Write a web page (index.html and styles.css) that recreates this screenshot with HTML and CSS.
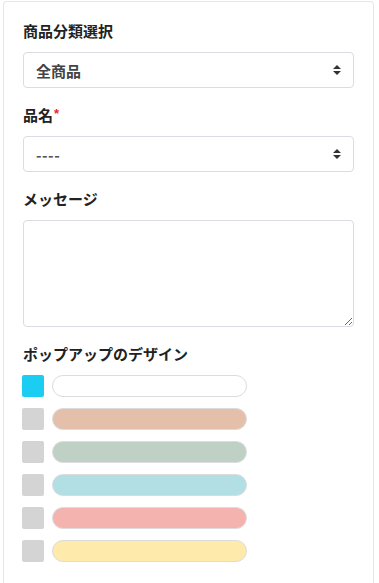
FILE: index.html
```html
<!DOCTYPE html>
<html lang="ja">
<head>
<meta charset="UTF-8" />
<meta name="viewport" content="width=device-width, initial-scale=1" />
<title>ポップアップ設定</title>
<link rel="stylesheet" href="styles.css">
</head>
<body>

<div class="page">
  <form class="card">
    <div class="field">
      <label class="field-label" for="category">商品分類選択</label>
      <select class="form-select" id="category">
        <option>全商品</option>
      </select>
    </div>

    <div class="field">
      <label class="field-label" for="product">品名<span class="required">*</span></label>
      <select class="form-select form-select-empty" id="product">
        <option>----</option>
      </select>
    </div>

    <div class="field">
      <label class="field-label" for="message">メッセージ</label>
      <textarea class="form-textarea" id="message"></textarea>
    </div>

    <div class="field">
      <div class="field-label">ポップアップのデザイン</div>
      <ul class="design-list">
        <li class="design-row"><span class="design-check is-checked"></span><span class="design-pill pill-white"></span></li>
        <li class="design-row"><span class="design-check"></span><span class="design-pill pill-beige"></span></li>
        <li class="design-row"><span class="design-check"></span><span class="design-pill pill-sage"></span></li>
        <li class="design-row"><span class="design-check"></span><span class="design-pill pill-sky"></span></li>
        <li class="design-row"><span class="design-check"></span><span class="design-pill pill-pink"></span></li>
        <li class="design-row"><span class="design-check"></span><span class="design-pill pill-cream"></span></li>
      </ul>
    </div>
  </form>
</div>

</body>
</html>
```

FILE: styles.css
```css
/* Page */
html, body {
  margin: 0;
  background: #fff;
}

body {
  font-family: "Noto Sans CJK JP", "Noto Sans", sans-serif;
  color: #222;
}

.page {
  padding: 1px 5px 0 3px;
}

/* Card */
.card {
  border: 1px solid #e6e6e6;
  border-bottom: none;
  border-radius: 4px 4px 0 0;
  padding: 18px 19px 30px;
  min-height: 600px;
  box-sizing: border-box;
}

.field {
  margin-bottom: 16px;
}

.field-label {
  display: block;
  height: 22px;
  font-size: 15px;
  font-weight: bold;
  line-height: 22px;
  margin-bottom: 10px;
  color: #222;
}

.required {
  color: #e8262a;
  font-family: "Liberation Sans", sans-serif;
  font-size: 13px;
  line-height: 0;
  vertical-align: 3px;
  margin-left: 1px;
}

/* Selects */
.form-select {
  display: block;
  width: 100%;
  height: 36px;
  box-sizing: border-box;
  appearance: none;
  -webkit-appearance: none;
  border: 1px solid #d9dce1;
  border-radius: 4px;
  padding: 0 30px 0 12px;
  font-family: inherit;
  font-size: 15px;
  font-weight: bold;
  color: #444;
  background-color: #fff;
  background-image: url("data:image/svg+xml,%3Csvg xmlns='http://www.w3.org/2000/svg' width='8' height='10' viewBox='0 0 8 10'%3E%3Cpath d='M4 0L8 4H0z M4 10L0 6H8z' fill='%23333'/%3E%3C/svg%3E");
  background-repeat: no-repeat;
  background-position: right 12px center;
  background-size: 8px 10px;
}

.form-select-empty {
  color: #555;
  letter-spacing: 0.5px;
}

/* Textarea */
.form-textarea {
  display: block;
  width: 100%;
  height: 107px;
  box-sizing: border-box;
  border: 1px solid #d9dce1;
  border-radius: 4px;
  padding: 8px 12px;
  font-family: inherit;
  font-size: 14px;
}

/* Design picker */
.design-list {
  list-style: none;
  margin: 0;
  padding: 0;
}

.design-row {
  display: flex;
  align-items: center;
  gap: 8px;
  margin: 0 0 11px -1px;
}

.design-check {
  width: 22px;
  height: 22px;
  border-radius: 2px;
  background: #d4d4d4;
}

.design-check.is-checked {
  background: #1ccdf3;
}

.design-pill {
  width: 195px;
  height: 22px;
  box-sizing: border-box;
  border: 1px solid #dcdcdc;
  border-radius: 11px;
}

.pill-white { background: #fff; }
.pill-beige { background: #e4c0ab; }
.pill-sage  { background: #bfd1c4; }
.pill-sky   { background: #b2dfe4; }
.pill-pink  { background: #f4b3ae; }
.pill-cream { background: #feebab; }
```
